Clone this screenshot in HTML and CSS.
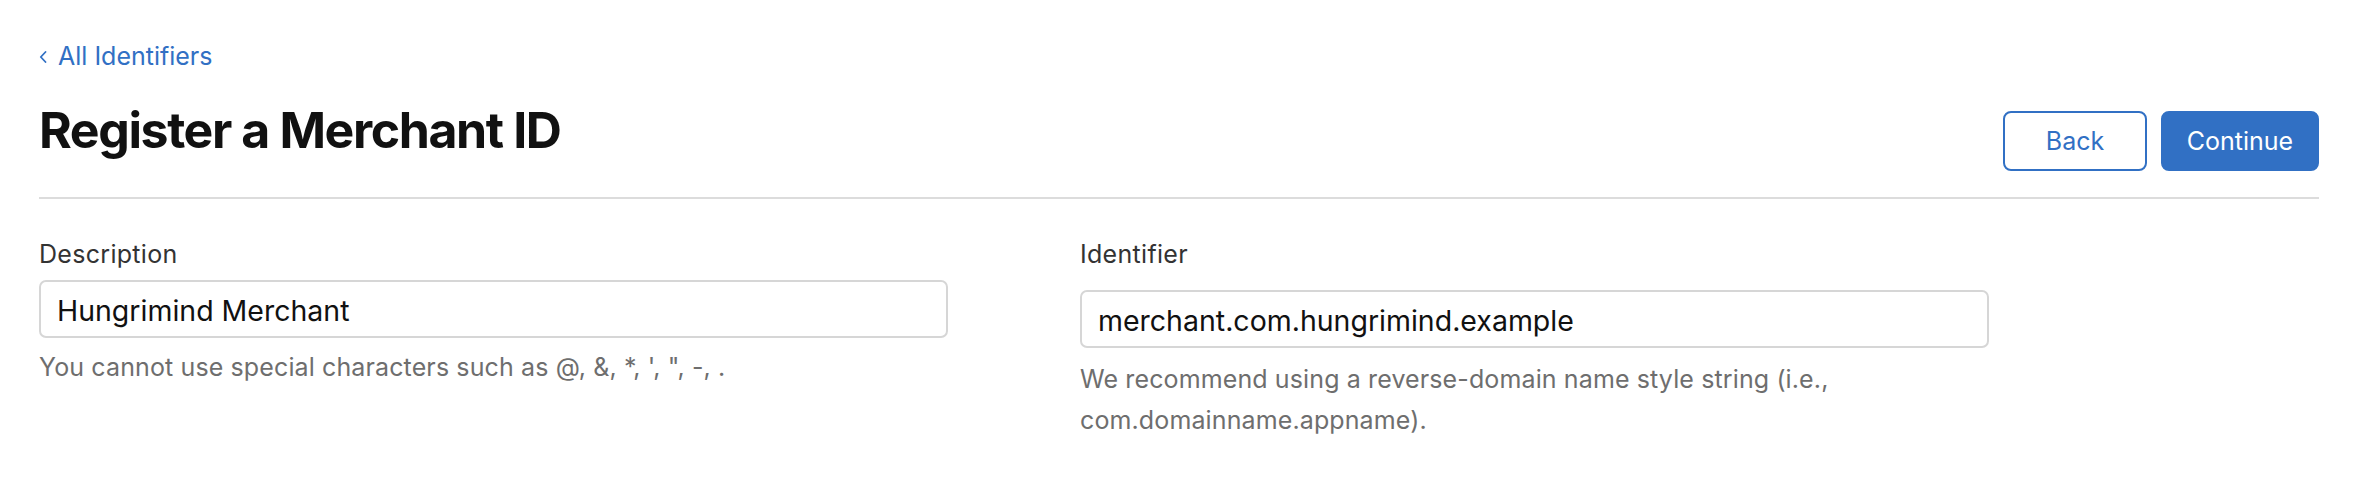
FILE: index.html
```html
<!DOCTYPE html>
<html lang="en">
<head>
<meta charset="utf-8">
<title>Register a Merchant ID</title>
<link rel="stylesheet" href="styles.css">
</head>
<body>
<div class="page">
  <a class="back-link" href="#">
    <svg class="chev" width="8" height="12" viewBox="0 0 8 12" aria-hidden="true"><path d="M6.5 1 L1.8 6 L6.5 11" fill="none" stroke="#3170c4" stroke-width="1.8" stroke-linecap="round" stroke-linejoin="round"/></svg>
    <span>All Identifiers</span>
  </a>
  <div class="header">
    <h1 class="title">Register a Merchant ID</h1>
    <div class="actions">
      <button class="btn btn-outline">Back</button>
      <button class="btn btn-primary">Continue</button>
    </div>
  </div>
  <div class="form">
    <div class="field field-left">
      <label class="label">Description</label>
      <div class="input input-left">Hungrimind Merchant</div>
      <p class="hint hint-left">You cannot use special characters such as @, &amp;, *, ', ", -, .</p>
    </div>
    <div class="field field-right">
      <label class="label">Identifier</label>
      <div class="input input-right">merchant.com.hungrimind.example</div>
      <p class="hint hint-right">We recommend using a reverse-domain name style string (i.e., com.domainname.appname).</p>
    </div>
  </div>
</div>
</body>
</html>
```
FILE: styles.css
```css
* { box-sizing: border-box; }
html, body { margin: 0; padding: 0; background: #fff; }
body {
  font-family: Inter, "Liberation Sans", sans-serif;
  color: #111;
}
.page {
  padding: 41px 45px 0 39px;
}
.back-link {
  display: flex;
  align-items: center;
  height: 30px;
  color: #3170c4;
  text-decoration: none;
  font-size: 25px;
  line-height: 30px;
}
.chev { margin-right: 11px; margin-top: 2px; }
.header {
  margin-top: 29px;
  display: flex;
  justify-content: space-between;
  align-items: flex-start;
  padding-bottom: 26px;
  border-bottom: 2px solid #dcdcdc;
}
.title {
  margin: 0;
  font-size: 50px;
  line-height: 60px;
  font-weight: 700;
  color: #111;
  letter-spacing: -1.4px;
}
.actions {
  margin-top: 11px;
  display: flex;
  gap: 14px;
}
.btn {
  height: 60px;
  border-radius: 8px;
  font-family: Inter, "Liberation Sans", sans-serif;
  font-size: 25px;
  padding: 0;
  cursor: pointer;
}
.btn-outline {
  width: 144px;
  background: #fff;
  border: 2px solid #3170c4;
  color: #3170c4;
}
.btn-primary {
  width: 158px;
  background: #3170c4;
  border: 2px solid #3170c4;
  color: #fff;
}
.form {
  display: flex;
  padding-top: 40px;
}
.field-left { width: 1041px; }
.field-right { width: 909px; }
.label {
  display: block;
  font-size: 25px;
  line-height: 30px;
  letter-spacing: 0.3px;
  color: #333;
}
.input {
  width: 909px;
  height: 58px;
  border: 2px solid #d6d6d6;
  border-radius: 7px;
  padding: 3px 16px 0;
  font-size: 28.5px;
  line-height: 51px;
  color: #111;
}
.input-left { margin-top: 11px; }
.input-right { margin-top: 21px; }
.hint {
  margin: 0;
  font-size: 25px;
  line-height: 41px;
  letter-spacing: 0.12px;
  color: #6e6e6e;
}
.hint-left { margin-top: 9px; }
.hint-right { margin-top: 11px; }
```
